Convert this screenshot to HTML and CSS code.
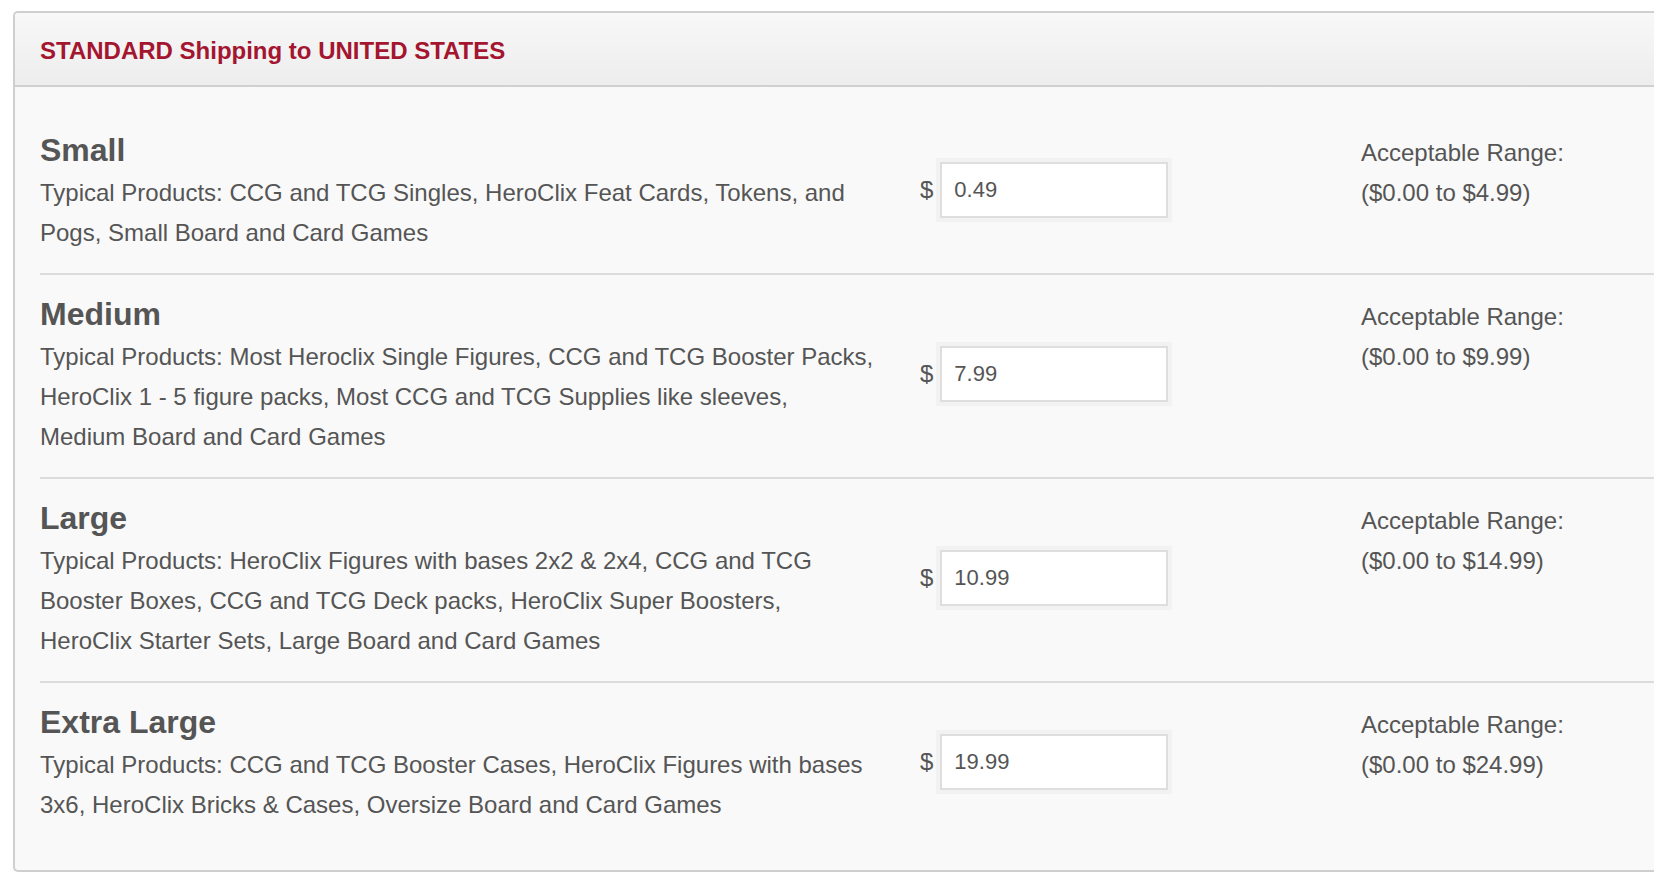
FILE: index.html
```html
<!doctype html>
<html>
<head>
<meta charset="utf-8">
<title>Shipping rates</title>
<link rel="stylesheet" href="styles.css">
</head>
<body>

<div class="panel">
	<div class="panel-head">STANDARD Shipping to UNITED STATES</div>
	<div class="panel-body">
		<div class="rate">
			<div class="rate-info">
				<h3>Small</h3>
				<p>Typical Products: CCG and TCG Singles, HeroClix Feat Cards, Tokens, and Pogs, Small Board and Card Games</p>
			</div>
			<div class="rate-price"><span>$</span><input type="text" value="0.49"></div>
			<div class="rate-range">Acceptable Range:<br>($0.00 to $4.99)</div>
		</div>
		<div class="rate">
			<div class="rate-info">
				<h3>Medium</h3>
				<p>Typical Products: Most Heroclix Single Figures, CCG and TCG Booster Packs, HeroClix 1 - 5 figure packs, Most CCG and TCG Supplies like sleeves, Medium Board and Card Games</p>
			</div>
			<div class="rate-price"><span>$</span><input type="text" value="7.99"></div>
			<div class="rate-range">Acceptable Range:<br>($0.00 to $9.99)</div>
		</div>
		<div class="rate">
			<div class="rate-info">
				<h3>Large</h3>
				<p>Typical Products: HeroClix Figures with bases 2x2 &amp; 2x4, CCG and TCG Booster Boxes, CCG and TCG Deck packs, HeroClix Super Boosters, HeroClix Starter Sets, Large Board and Card Games</p>
			</div>
			<div class="rate-price"><span>$</span><input type="text" value="10.99"></div>
			<div class="rate-range">Acceptable Range:<br>($0.00 to $14.99)</div>
		</div>
		<div class="rate">
			<div class="rate-info">
				<h3>Extra Large</h3>
				<p>Typical Products: CCG and TCG Booster Cases, HeroClix Figures with bases 3x6, HeroClix Bricks &amp; Cases, Oversize Board and Card Games</p>
			</div>
			<div class="rate-price"><span>$</span><input type="text" value="19.99"></div>
			<div class="rate-range">Acceptable Range:<br>($0.00 to $24.99)</div>
		</div>
	</div>
</div>

</body>
</html>
```

FILE: styles.css
```css
*{ margin:0; padding:0; box-sizing:border-box;}
body{ background:#fff; font-family:"Liberation Sans", Arial, Helvetica, sans-serif; color:#555; overflow:hidden;}

.panel{ margin:11px 0 0 13px; border:2px solid #cfcfcf; border-right:none; border-radius:5px 0 0 5px; background:#f9f9f9; overflow:hidden;}
.panel-head{ padding:24px 0 20px 25px; font-size:24px; line-height:28px; font-weight:bold; color:#a4152f; background:linear-gradient(#f8f8f8,#ededed); border-bottom:2px solid #d0d0d0;}
.panel-body{ padding:24px 0 25px 25px;}

.rate{ display:flex; padding:17px 0 21px; border-bottom:2px solid #dcdcdc;}
.rate:last-child{ border-bottom:none;}

.rate-info{ flex:0 0 838px;}
.rate-info h3{ font-size:32px; line-height:44px; font-weight:bold; color:#555;}
.rate-info p{ font-size:24px; line-height:40px; position:relative; top:1px;}

.rate-price{ flex:0 0 483px; display:flex; align-items:center; padding-left:42px;}
.rate-price span{ font-size:24px; margin-right:3px;}
.rate-price input{ width:228px; height:56px; padding:0 12px; border:2px solid #dedede; box-shadow:0 0 0 4px #f2f2f2; background:#fff; font-family:inherit; font-size:22px; color:#555; outline:none; margin-left:4px;}

.rate-range{ font-size:24px; line-height:40px; padding-top:5px;}
```
